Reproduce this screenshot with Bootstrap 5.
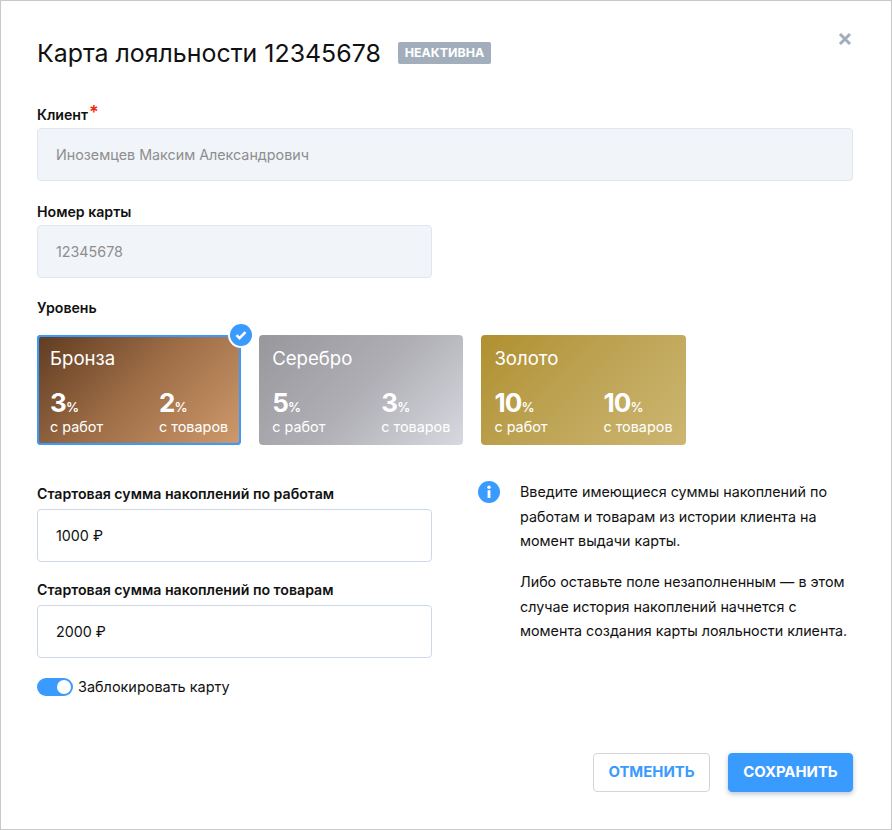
<!DOCTYPE html>
<html lang="ru">
<head>
  <meta charset="UTF-8" />
  <title>Карта лояльности</title>
  <link href="https://cdn.jsdelivr.net/npm/bootstrap@5.3.3/dist/css/bootstrap.min.css" rel="stylesheet"/>
  <style>
    html, body { height: 100%; }
    body {
      background: #fff;
      color: #111;
      font-family: Inter, "Liberation Sans", sans-serif;
      font-size: 14.3px;
    }
    .loyalty-modal {
      position: relative;
      width: 892px;
      height: 830px;
      border: 1px solid #c8c8c8;
      padding: 0 38px 0 36px;
    }
    .modal-head { height: 105px; padding-top: 35px; }
    .modal-title-text { font-size: 24.9px; font-weight: 400; line-height: 34px; margin: 0; }
    .status-tag {
      background: #a2aebb;
      color: #fff;
      font-size: 12.4px;
      font-weight: 700;
      line-height: 22px;
      height: 22px;
      padding: 0 7px;
      border-radius: 2px;
      margin-left: 17px;
      margin-top: 6px;
    }
    .close-x { position: absolute; top: 31px; right: 39px; width: 14px; height: 14px; padding: 0; border: 0; background: none; }
    .close-x svg { display: block; }
    .field-label { display: block; font-size: 14.15px; font-weight: 600; line-height: 18px; margin-bottom: 5px; }
    .label-tight { margin-bottom: 4px; }
    .req { color: #f02a0a; font-size: 18px; line-height: 10px; vertical-align: 1px; margin-left: 1px; }
    .field-input.form-control {
      height: 53px;
      border: 1px solid #cdd9e8;
      border-radius: 4px;
      padding: 0 18px;
      font-size: 14.3px;
      color: #111;
      box-shadow: none;
    }
    .field-input.form-control:disabled { background: #f1f4f9; color: #8e8e8e; border-color: #dfe6ef; }
    .short-field { width: 395px; }
    .client-group { margin-bottom: 22px; }
    .number-group { margin-bottom: 21px; }
    .level-label { margin-bottom: 18px; }
    .level-list { display: flex; gap: 18px; margin-bottom: 40px; }
    .level-box {
      position: relative;
      width: 204.2px;
      height: 110px;
      border-radius: 4px;
      color: #fff;
      padding: 11px 13px 0;
    }
    .level-box.selected { box-shadow: inset 0 0 0 2px #3a9bff; }
    .bronze { background: linear-gradient(135deg, #5f3b20 0%, #a06f48 50%, #cf9a6c 100%); }
    .silver { background: linear-gradient(135deg, #97979c 0%, #aeaeb4 50%, #d8d8e0 100%); }
    .gold { background: linear-gradient(135deg, #b0902f 0%, #bea456 50%, #ccb671 100%); }
    .level-name { font-size: 18.6px; line-height: 24px; margin-bottom: 21px; }
    .level-rates { display: flex; }
    .rate-col { width: 109px; flex: none; }
    .rate-num { font-size: 26px; font-weight: 700; line-height: 24px; letter-spacing: -.8px; margin-bottom: -1px; }
    .rate-num span { font-size: 13px; font-weight: 600; letter-spacing: -.3px; }
    .rate-cap { font-size: 14.4px; line-height: 18px; white-space: nowrap; }
    .check-mark { position: absolute; top: -13px; right: -13px; }
    .left-col { width: 395px; flex: none; }
    .hint-col { width: 375px; margin-left: 46px; margin-top: -5px; }
    .hint-text { line-height: 24.5px; margin: 0 0 16.5px; }
    .hint-icon { flex: none; margin-right: 20px; margin-top: 1px; }
    .sum-group { margin-bottom: 19px; }
    .sum-group .field-label { margin-bottom: 6px; }
    .switch-row { display: flex; align-items: center; gap: 5px; line-height: 20px; font-size: 14.45px; }
    .switch-track { width: 36px; height: 18px; border-radius: 9px; background: #3a9bff; position: relative; flex: none; }
    .switch-track::after { content: ""; position: absolute; right: 2px; top: 2px; width: 14px; height: 14px; border-radius: 50%; background: #fff; }
    .modal-actions { position: absolute; right: 38px; bottom: 37px; display: flex; gap: 18px; }
    .action-btn {
      height: 39px;
      border-radius: 4px;
      font-size: 14.9px;
      font-weight: 700;
      padding: 0;
    }
    .btn-cancel { width: 117px; background: #fff; border: 1px solid #d4d4d4; color: #3a9bff; }
    .btn-save { width: 125px; background: #3a9bff; border: 1px solid #3a9bff; color: #fff; box-shadow: 0 2px 5px rgba(30,60,100,.3); }
  </style>
</head>
<body>
  <div class="loyalty-modal">
    <div class="modal-head d-flex align-items-start">
      <h1 class="modal-title-text">Карта лояльности 12345678</h1>
      <span class="status-tag">НЕАКТИВНА</span>
      <button class="close-x" type="button" aria-label="Закрыть">
        <svg width="14" height="14" viewBox="0 0 14 14"><path d="M2 2l10 10M12 2L2 12" stroke="#a2aebb" stroke-width="3"/></svg>
      </button>
    </div>

    <div class="client-group">
      <label class="field-label label-tight">Клиент<span class="req">*</span></label>
      <input class="form-control field-input" value="Иноземцев Максим Александрович" disabled />
    </div>
    <div class="number-group">
      <label class="field-label label-tight">Номер карты</label>
      <input class="form-control field-input short-field" value="12345678" disabled />
    </div>

    <label class="field-label level-label">Уровень</label>
    <div class="level-list">
      <div class="level-box bronze selected">
        <div class="level-name">Бронза</div>
        <div class="level-rates">
          <div class="rate-col"><div class="rate-num">3<span>%</span></div><div class="rate-cap">с работ</div></div>
          <div class="rate-col"><div class="rate-num">2<span>%</span></div><div class="rate-cap">с товаров</div></div>
        </div>
        <svg class="check-mark" width="26" height="26" viewBox="0 0 26 26"><circle cx="13" cy="13" r="13" fill="#fff"/><circle cx="13" cy="13" r="11" fill="#3a9bff"/><path d="M8.5 13.2l3 3 6-6" fill="none" stroke="#fff" stroke-width="2.6"/></svg>
      </div>
      <div class="level-box silver">
        <div class="level-name">Серебро</div>
        <div class="level-rates">
          <div class="rate-col"><div class="rate-num">5<span>%</span></div><div class="rate-cap">с работ</div></div>
          <div class="rate-col"><div class="rate-num">3<span>%</span></div><div class="rate-cap">с товаров</div></div>
        </div>
      </div>
      <div class="level-box gold">
        <div class="level-name">Золото</div>
        <div class="level-rates">
          <div class="rate-col"><div class="rate-num">10<span>%</span></div><div class="rate-cap">с работ</div></div>
          <div class="rate-col"><div class="rate-num">10<span>%</span></div><div class="rate-cap">с товаров</div></div>
        </div>
      </div>
    </div>

    <div class="d-flex">
      <div class="left-col">
        <div class="sum-group">
          <label class="field-label">Стартовая сумма накоплений по работам</label>
          <input class="form-control field-input" value="1000 ₽" />
        </div>
        <div class="sum-group">
          <label class="field-label">Стартовая сумма накоплений по товарам</label>
          <input class="form-control field-input" value="2000 ₽" />
        </div>
        <div class="switch-row"><span class="switch-track"></span><span>Заблокировать карту</span></div>
      </div>
      <div class="hint-col d-flex">
        <svg class="hint-icon" width="22" height="22" viewBox="0 0 22 22"><circle cx="11" cy="11" r="11" fill="#3a9bff"/><rect x="9.6" y="9.2" width="2.8" height="7.8" fill="#fff"/><circle cx="11" cy="6.2" r="1.7" fill="#fff"/></svg>
        <div>
          <p class="hint-text">Введите имеющиеся суммы накоплений по работам и товарам из истории клиента на момент выдачи карты.</p>
          <p class="hint-text">Либо оставьте поле незаполненным — в этом случае история накоплений начнется с момента создания карты лояльности клиента.</p>
        </div>
      </div>
    </div>

    <div class="modal-actions">
      <button class="btn action-btn btn-cancel" type="button">ОТМЕНИТЬ</button>
      <button class="btn action-btn btn-save" type="button">СОХРАНИТЬ</button>
    </div>
  </div>
  <script src="https://cdn.jsdelivr.net/npm/bootstrap@5.3.3/dist/js/bootstrap.bundle.min.js"></script>
</body>
</html>
